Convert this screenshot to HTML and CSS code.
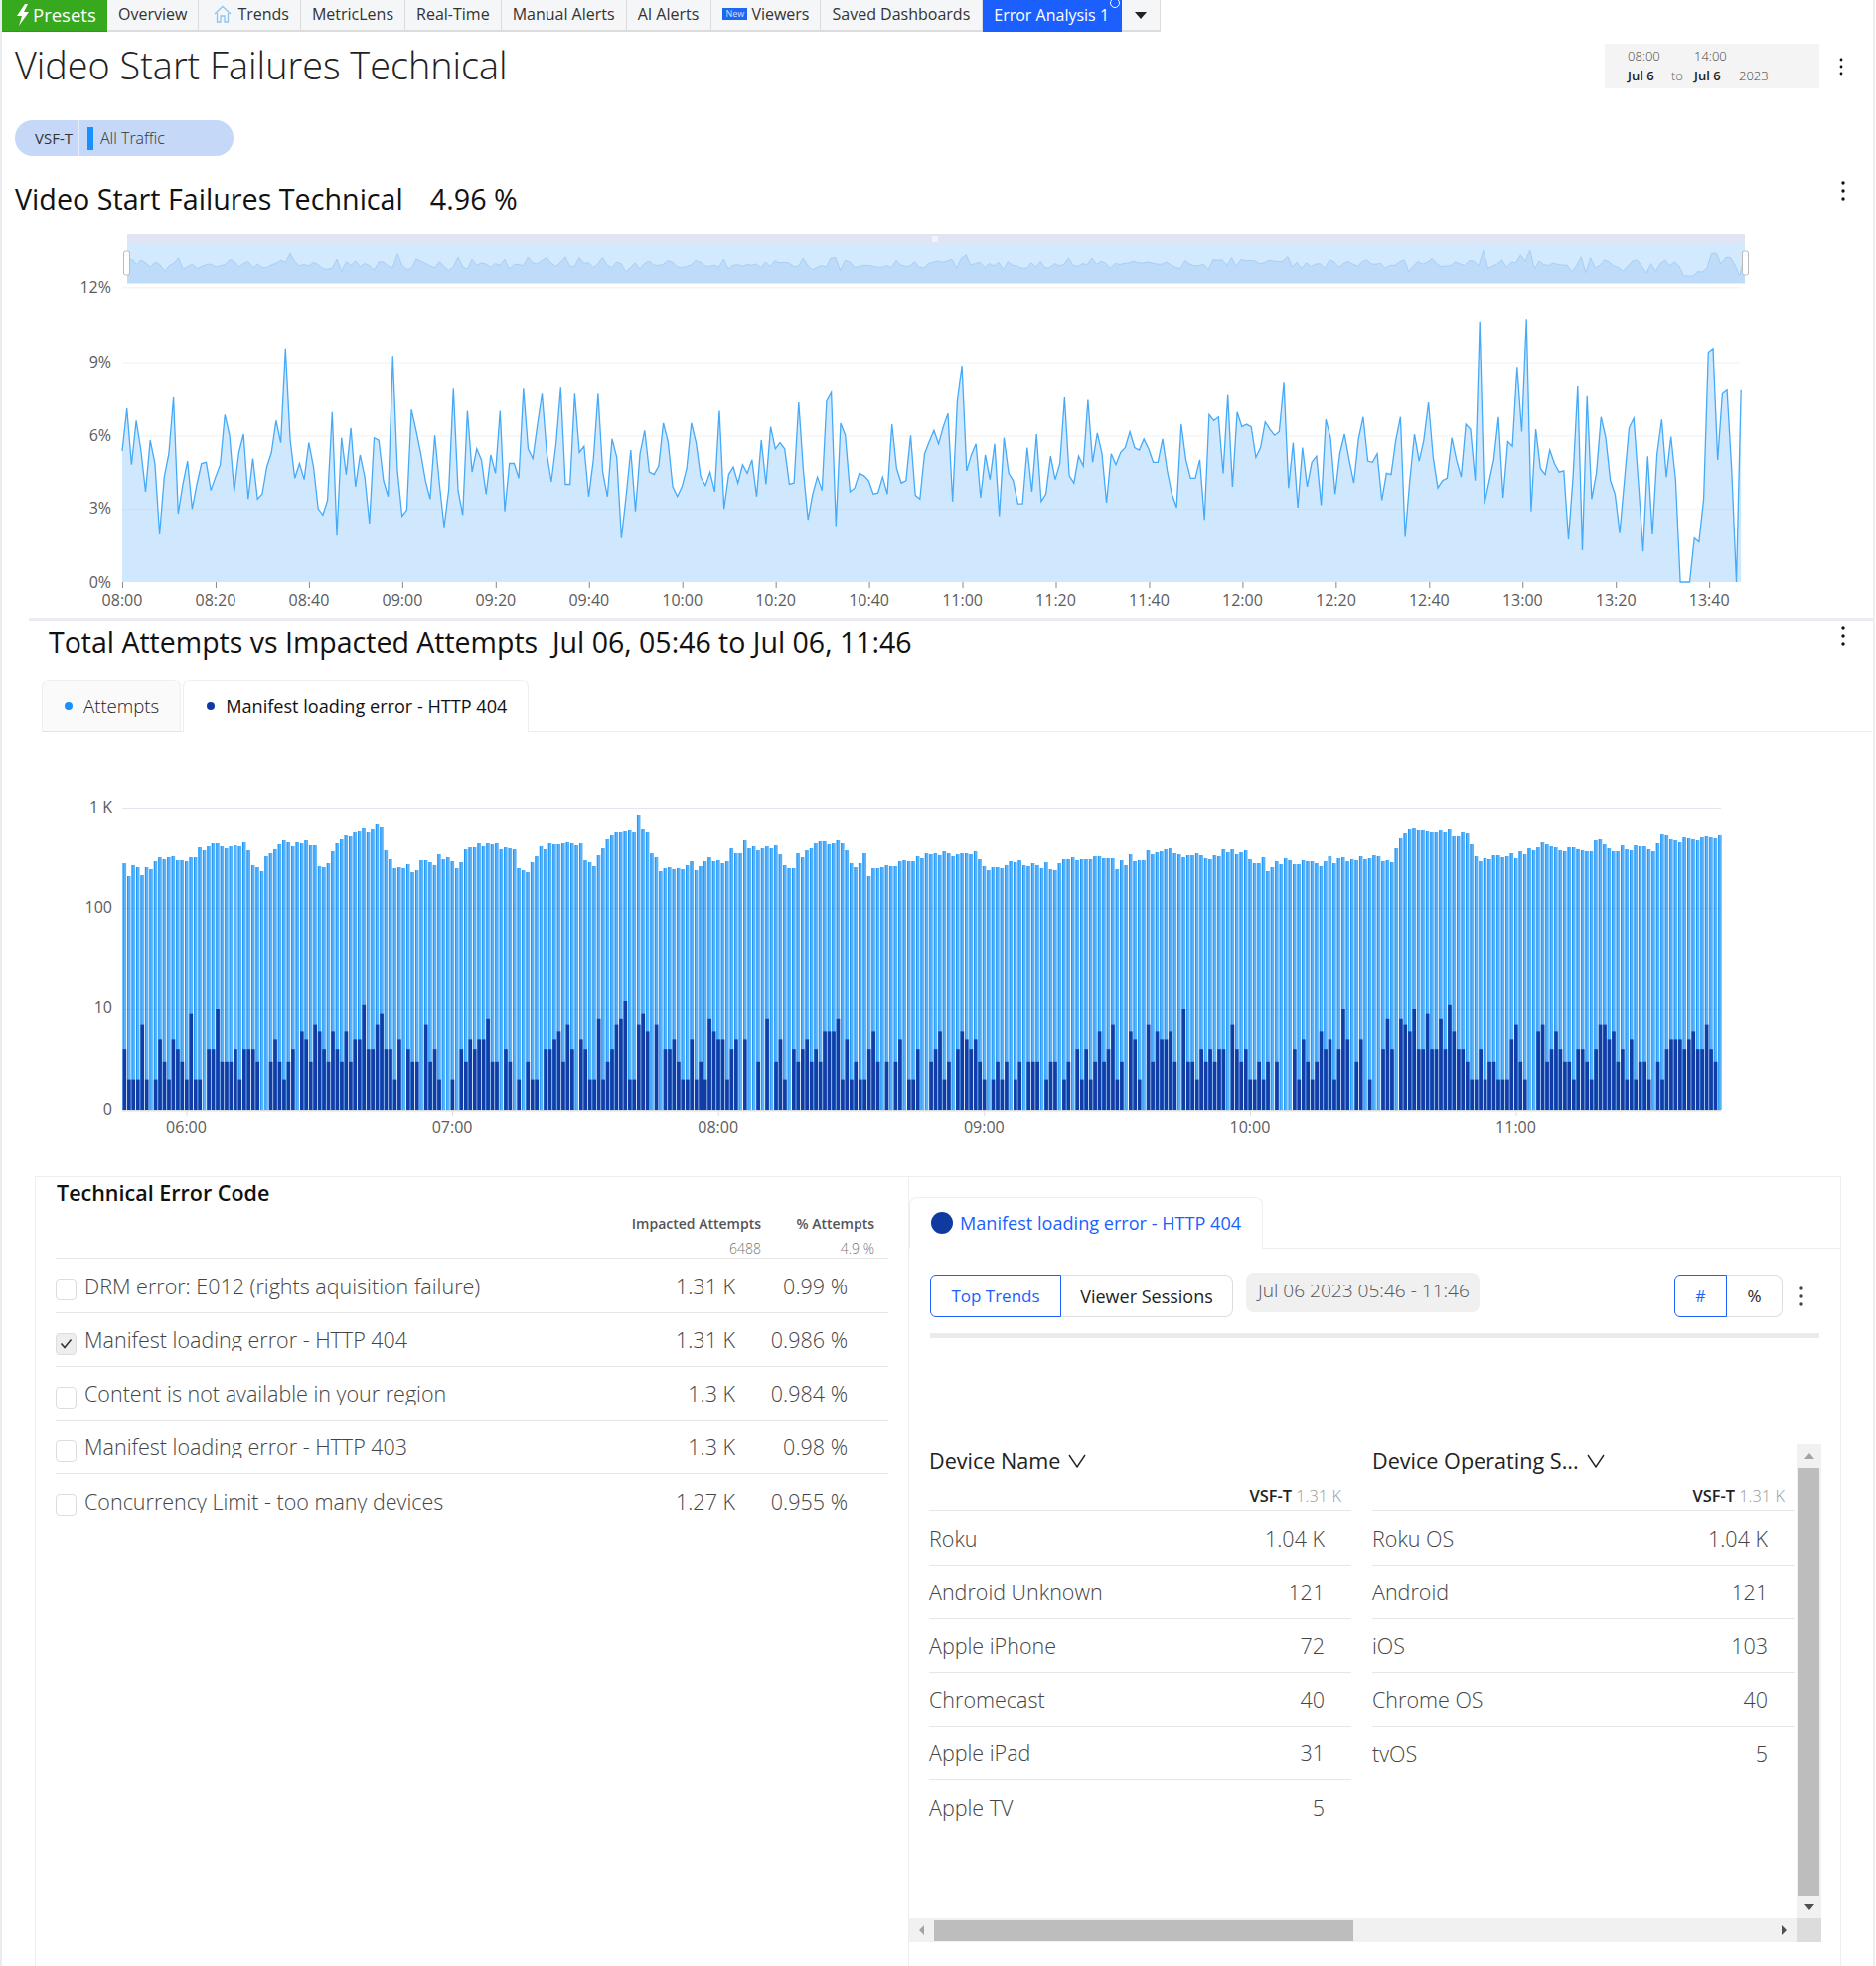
FILE: index.html
```html
<!DOCTYPE html>
<html lang="en">
<head>
    <meta charset="UTF-8">
    <meta name="viewport" content="width=device-width, initial-scale=1.0">
    <title>Video Start Failures Technical</title>
    <link rel="stylesheet" href="styles.css">
</head>
<body>
<div class="page">
    <nav class="tabs">
        <a class="tab tab-presets">
            <svg class="bolt" width="14" height="22" viewBox="0 0 14 22"><path d="M9 0 L1 12 L6 12 L3 22 L13 8 L8 8 L12 0 Z" fill="#fff"/></svg>
            Presets
        </a>
        <a class="tab">Overview</a>
        <a class="tab">
            <svg class="home" width="18" height="18" viewBox="0 0 18 18"><path d="M1 9 L9 1.5 L17 9 M3.5 8 V17 H7 V11 H11 V17 H14.5 V8" fill="none" stroke="#8cc4f2" stroke-width="1.3"/></svg>
            Trends
        </a>
        <a class="tab">MetricLens</a>
        <a class="tab">Real-Time</a>
        <a class="tab">Manual Alerts</a>
        <a class="tab tab-wide">AI Alerts</a>
        <a class="tab"><span class="new-badge">New</span>Viewers</a>
        <a class="tab tab-wide">Saved Dashboards</a>
        <a class="tab tab-active">Error Analysis 1<span class="tab-ring"></span></a>
        <a class="tab tab-more"><span class="caret"></span></a>
    </nav>

    <header class="title-row">
        <h1>Video Start Failures Technical</h1>
        <div class="date-box">
            <div class="date-col"><span class="date-time">08:00</span><span class="date-day">Jul 6</span></div>
            <div class="date-to">to</div>
            <div class="date-col"><span class="date-time">14:00</span><span class="date-day">Jul 6</span></div>
            <div class="date-year">2023</div>
        </div>
        <svg class="dots" width="4" height="18" viewBox="0 0 4 18"><circle cx="2" cy="2" r="1.4"/><circle cx="2" cy="9" r="1.4"/><circle cx="2" cy="16" r="1.4"/></svg>
    </header>

    <div class="pill">
        <span class="pill-metric">VSF-T</span>
        <span class="pill-bar"></span>
        <span class="pill-filter">All Traffic</span>
    </div>

    <div class="section-head">
        <h2>Video Start Failures Technical<span class="metric-value">4.96 %</span></h2>
        <svg class="dots" width="4" height="20" viewBox="0 0 4 20"><circle cx="2" cy="2" r="1.7"/><circle cx="2" cy="10" r="1.7"/><circle cx="2" cy="18" r="1.7"/></svg>
    </div>

    <div id="trendChart" class="chart trend-chart"></div>

    <div class="section-head section-head-attempts">
        <h2>Total Attempts vs Impacted Attempts&nbsp; Jul 06, 05:46 to Jul 06, 11:46</h2>
        <svg class="dots" width="4" height="20" viewBox="0 0 4 20"><circle cx="2" cy="2" r="1.7"/><circle cx="2" cy="10" r="1.7"/><circle cx="2" cy="18" r="1.7"/></svg>
    </div>

    <div class="series-tabs">
        <div class="series-tab series-tab-off"><span class="dot dot-light"></span>Attempts</div>
        <div class="series-tab"><span class="dot dot-dark"></span>Manifest loading error - HTTP 404</div>
    </div>

    <div id="attemptsChart" class="chart attempts-chart"></div>

    <div class="breakdown">
        <section class="errors">
            <h3>Technical Error Code</h3>
            <div class="errors-head">
                <span>Impacted Attempts</span>
                <span>% Attempts</span>
                <span class="errors-total">6488</span>
                <span class="errors-total">4.9 %</span>
            </div>
            <div class="error-row">
                <span class="check"></span>
                <span class="error-name error-name-full">DRM error: E012 (rights aquisition failure)</span>
                <span class="num">1.31 K</span>
                <span class="num">0.99 %</span>
            </div>
            <div class="error-row">
                <span class="check check-on"><svg width="13" height="11" viewBox="0 0 13 11"><path d="M1.5 5.5 L5 9.5 L11.5 1.5" fill="none" stroke="#333" stroke-width="1.6"/></svg></span>
                <span class="error-name">Manifest loading error - HTTP 404</span>
                <span class="num">1.31 K</span>
                <span class="num">0.986 %</span>
            </div>
            <div class="error-row">
                <span class="check"></span>
                <span class="error-name">Content is not available in your region</span>
                <span class="num">1.3 K</span>
                <span class="num">0.984 %</span>
            </div>
            <div class="error-row">
                <span class="check"></span>
                <span class="error-name">Manifest loading error - HTTP 403</span>
                <span class="num">1.3 K</span>
                <span class="num">0.98 %</span>
            </div>
            <div class="error-row error-row-last">
                <span class="check"></span>
                <span class="error-name">Concurrency Limit - too many devices</span>
                <span class="num">1.27 K</span>
                <span class="num">0.955 %</span>
            </div>
        </section>

        <section class="detail">
            <div class="detail-tabs">
                <div class="detail-tab"><span class="detail-dot"></span>Manifest loading error - HTTP 404</div>
            </div>

            <div class="toolbar">
                <div class="btn-group">
                    <button class="btn btn-on btn-trends">Top Trends</button>
                    <button class="btn btn-sessions">Viewer Sessions</button>
                </div>
                <div class="date-chip">Jul 06 2023 05:46 - 11:46</div>
                <div class="btn-group btn-group-right">
                    <button class="btn btn-on btn-hash">#</button>
                    <button class="btn btn-pct">%</button>
                </div>
                <svg class="dots dots-toolbar" width="4" height="20" viewBox="0 0 4 20"><circle cx="2" cy="2" r="1.7" fill="#444"/><circle cx="2" cy="10" r="1.7" fill="#444"/><circle cx="2" cy="18" r="1.7" fill="#444"/></svg>
            </div>
            <div class="toolbar-rule"></div>

            <div class="scroll-area">
                <div class="device-cols">
                    <div class="device-col">
                        <div class="device-head">Device Name
                            <svg width="18" height="14" viewBox="0 0 18 14"><path d="M1 1 L9 13 L17 1" fill="none" stroke="#222" stroke-width="1.4"/></svg>
                        </div>
                        <div class="device-sub"><b>VSF-T</b> 1.31 K</div>
                        <div class="device-row"><span>Roku</span><span>1.04 K</span></div>
                        <div class="device-row"><span>Android Unknown</span><span>121</span></div>
                        <div class="device-row"><span>Apple iPhone</span><span>72</span></div>
                        <div class="device-row"><span>Chromecast</span><span>40</span></div>
                        <div class="device-row"><span>Apple iPad</span><span>31</span></div>
                        <div class="device-row device-row-last"><span>Apple TV</span><span>5</span></div>
                    </div>
                    <div class="device-col">
                        <div class="device-head">Device Operating S...
                            <svg width="18" height="14" viewBox="0 0 18 14"><path d="M1 1 L9 13 L17 1" fill="none" stroke="#222" stroke-width="1.4"/></svg>
                        </div>
                        <div class="device-sub"><b>VSF-T</b> 1.31 K</div>
                        <div class="device-row"><span>Roku OS</span><span>1.04 K</span></div>
                        <div class="device-row"><span>Android</span><span>121</span></div>
                        <div class="device-row"><span>iOS</span><span>103</span></div>
                        <div class="device-row"><span>Chrome OS</span><span>40</span></div>
                        <div class="device-row device-row-last"><span>tvOS</span><span>5</span></div>
                    </div>
                </div>
                <div class="vbar">
                    <span class="arrow arrow-up"></span>
                    <span class="vbar-thumb"></span>
                    <span class="arrow arrow-down"></span>
                </div>
                <div class="hbar">
                    <span class="arrow arrow-left"></span>
                    <span class="hbar-thumb"></span>
                    <span class="arrow arrow-right"></span>
                </div>
                <div class="corner"></div>
            </div>
        </section>
    </div>
</div>
<script src="chart.js"></script>
</body>
</html>
```

FILE: styles.css
```css
* {
    box-sizing: border-box;
}
body {
    margin: 0;
    font-family: "Open Sans", Arial, sans-serif;
    color: #222;
    background-color: #fff;
}
.page {
    width: 1887px;
    height: 1979px;
    overflow: hidden;
    border-left: 2px solid #e9edf1;
    border-right: 2px solid #eeeeee;
}

/* top tabs */
.tabs {
    display: flex;
    height: 32px;
}
.tab {
    display: flex;
    align-items: center;
    height: 32px;
    padding: 0 11px 3px;
    font-size: 16px;
    color: #333;
    background-color: #f5f6f7;
    border-right: 1px solid #dcdcdc;
    border-bottom: 2px solid #dcdcdc;
    position: relative;
}
.tab-wide {
    padding-right: 12px;
}
.tab-presets {
    width: 106px;
    padding: 0 0 2px 14px;
    font-size: 18.5px;
    color: #fff;
    background-color: #37a91f;
    border-right: none;
    border-bottom: 1px solid #2f9a19;
}
.bolt {
    margin-right: 3px;
}
.home {
    margin: 0 6px 0 4px;
}
.new-badge {
    width: 25px;
    height: 12px;
    margin-right: 4px;
    font-size: 9px;
    line-height: 12px;
    text-align: center;
    color: #cfe0ff;
    background-color: #1f66f5;
}
.tab-active {
    padding-right: 13px;
    color: #fff;
    background-color: #1b5fff;
    border-right: none;
    border-bottom: none;
}
.tab-ring {
    position: absolute;
    top: -2px;
    right: 2px;
    width: 10px;
    height: 10px;
    border: 1px solid #fff;
    border-radius: 50%;
    background-color: #1b5fff;
}
.tab-more {
    width: 39px;
    padding: 0;
    justify-content: center;
}
.caret {
    width: 0;
    height: 0;
    border-left: 6px solid transparent;
    border-right: 6px solid transparent;
    border-top: 7px solid #222;
}

/* title */
.title-row {
    display: flex;
    align-items: center;
    margin-top: 12px;
    padding: 0 30px 0 13px;
    height: 45px;
}
h1 {
    flex: 1;
    margin: -2px 0 0;
    font-size: 37.8px;
    font-weight: 300;
    line-height: 44px;
    color: #222;
}
.date-box {
    display: flex;
    gap: 11px;
    width: 216px;
    height: 45px;
    padding: 2px 0 0 23px;
    font-size: 13px;
    background-color: #f4f4f4;
}
.date-col {
    display: flex;
    flex-direction: column;
    width: 33px;
    line-height: 20px;
}
.date-time {
    font-weight: 300;
    color: #444;
}
.date-day {
    font-weight: 600;
    color: #222;
    white-space: nowrap;
}
.date-to {
    width: 12px;
    margin-top: 20px;
    line-height: 20px;
    color: #666;
    font-weight: 300;
}
.date-year {
    margin-top: 20px;
    margin-left: 1px;
    line-height: 20px;
    color: #444;
    font-weight: 300;
}
.dots {
    fill: #111;
    flex: none;
}
.title-row .dots {
    margin-left: 20px;
}

.pill {
    display: flex;
    align-items: center;
    width: 220px;
    height: 36px;
    margin: 32px 0 0 13px;
    font-size: 15px;
    background-color: #c5d8f7;
    border-radius: 18px;
}
.pill-metric {
    width: 65px;
    height: 36px;
    padding-left: 20px;
    line-height: 36px;
    color: #333;
    border-right: 1px solid #e4ecfa;
}
.pill-bar {
    width: 6px;
    height: 23px;
    margin-left: 8px;
    background-color: #1890ff;
}
.pill-filter {
    margin-left: 7px;
    font-size: 16px;
    font-weight: 300;
    color: #333;
}

/* section headings */
.section-head {
    display: flex;
    justify-content: space-between;
    align-items: flex-start;
    height: 36px;
    margin-top: 25px;
    padding: 0 28px 0 13px;
}
h2 {
    margin: 0;
    font-size: 28.7px;
    font-weight: 400;
    line-height: 36px;
    color: #111;
}
.metric-value {
    margin-left: 27px;
}
.section-head-attempts {
    margin-top: 3px;
    padding-left: 47px;
}
.section-head-attempts h2 {
    font-size: 28.5px;
}
.section-head-attempts .dots {
    margin-top: 2px;
}
.chart svg {
    display: block;
}
.trend-chart {
    height: 400px;
    margin-top: 7px;
}
.attempts-chart {
    height: 447px;
}

.series-tabs {
    display: flex;
    gap: 2px;
    width: 1842px;
    height: 53px;
    margin: 20px 0 0 40px;
    border-bottom: 1px solid #eeeeee;
}
.series-tab {
    display: flex;
    align-items: center;
    height: 53px;
    padding: 0 21px 0 23px;
    font-size: 18.1px;
    color: #111;
    background-color: #fff;
    border: 1px solid #eeeeee;
    border-bottom: none;
    border-radius: 8px 8px 0 0;
}
.series-tab-off {
    padding: 0 21px 0 22px;
    font-size: 18.6px;
    font-weight: 300;
    color: #222;
    background-color: #fafafa;
    border-bottom: 1px solid #e4e4e4;
}
.dot {
    width: 8px;
    height: 8px;
    margin-right: 11px;
    border-radius: 50%;
}
.dot-light {
    background-color: #1890ff;
}
.dot-dark {
    background-color: #0f3ba1;
}

/* breakdown panels */
.breakdown {
    display: flex;
    width: 1818px;
    height: 795px;
    margin-left: 33px;
    border-top: 1px solid #eeeeee;
    border-left: 1px solid #eeeeee;
    border-right: 1px solid #eeeeee;
}
.errors {
    width: 878px;
    padding: 0 20px;
    flex: none;
}
h3 {
    margin: 0;
    padding-left: 1px;
    font-size: 21.5px;
    font-weight: 600;
    line-height: 32px;
    color: #111;
}
.errors-head {
    display: grid;
    grid-template-columns: 1fr 114px;
    justify-items: end;
    padding-right: 14px;
    margin-top: 2px;
    font-size: 14px;
    font-weight: 600;
    line-height: 26px;
    color: #555;
    border-bottom: 1px solid #e6e6e6;
    height: 48px;
}
.errors-total {
    font-weight: 300;
    font-size: 14px;
    line-height: 24px;
    color: #777;
}
.error-row {
    display: grid;
    grid-template-columns: 21px 1fr 130px 113px;
    align-items: center;
    height: 54px;
    padding-right: 41px;
    font-size: 21.5px;
    font-weight: 300;
    color: #444;
    border-bottom: 1px solid #e6e6e6;
}
.errors-head + .error-row {
    height: 55px;
}
.error-row-last {
    border-bottom: none;
}
.check {
    display: flex;
    align-items: center;
    justify-content: center;
    width: 21px;
    height: 22px;
    margin-top: 8px;
    border: 1px solid #dddddd;
    border-radius: 4px;
}
.check-on {
    background-color: #eeeeee;
}
/* the row clips descenders, as the real table does */
.error-name {
    height: 23px;
    margin-left: 8px;
    overflow: hidden;
    line-height: 23px;
    white-space: nowrap;
}
.error-name-full {
    overflow: visible;
}
.num {
    text-align: right;
}

.detail {
    flex: 1;
    border-left: 1px solid #eeeeee;
    padding-top: 20px;
}
.detail-tabs {
    height: 52px;
    border-bottom: 1px solid #eeeeee;
}
.detail-tab {
    display: flex;
    align-items: center;
    width: 356px;
    height: 52px;
    padding-left: 21px;
    font-size: 18.1px;
    color: #1b5fff;
    background-color: #fff;
    border: 1px solid #eeeeee;
    border-bottom: 1px solid #fff;
    border-radius: 8px 8px 0 0;
}
.detail-dot {
    width: 22px;
    height: 22px;
    margin-right: 7px;
    border-radius: 50%;
    background-color: #0f3ba1;
}
.toolbar {
    display: flex;
    align-items: flex-start;
    height: 43px;
    margin: 26px 0 0 21px;
}
.btn-group {
    display: flex;
}
.btn-group-right {
    margin-left: 196px;
}
.btn {
    height: 43px;
    font-family: inherit;
    font-size: 18px;
    color: #222;
    background-color: #fff;
    border: 1px solid #dddddd;
}
.btn-on {
    color: #1b5fff;
    border-color: #1b5fff;
    border-radius: 6px 0 0 6px;
}
.btn-trends {
    width: 132px;
    font-size: 17px;
}
.btn-sessions {
    width: 173px;
    border-left: none;
    border-radius: 0 8px 8px 0;
}
.btn-hash {
    width: 53px;
    font-size: 16px;
}
.btn-pct {
    width: 56px;
    font-size: 17px;
    border-left: none;
    border-radius: 0 8px 8px 0;
}
.date-chip {
    width: 235px;
    height: 40px;
    margin: -2px 0 0 13px;
    padding-left: 12px;
    font-size: 19.1px;
    line-height: 36px;
    color: #555;
    font-weight: 300;
    background-color: #f0f0f0;
    border-radius: 8px;
}
.dots-toolbar {
    margin: 12px 0 0 17px;
}
.toolbar-rule {
    width: 895px;
    height: 5px;
    margin: 16px 0 0 21px;
    background-color: #ebebeb;
}

/* device tables with fake scrollbars */
.scroll-area {
    display: grid;
    grid-template-columns: 893px 25px;
    grid-template-rows: 477px 24px;
    width: 918px;
    margin-top: 107px;
}
.device-cols {
    display: flex;
    gap: 21px;
    padding-left: 20px;
}
.device-col {
    width: 425px;
    flex: none;
}
.device-head {
    display: flex;
    align-items: center;
    gap: 8px;
    height: 33px;
    font-size: 21.6px;
    color: #222;
}
.device-sub {
    height: 34px;
    padding: 6px 10px 0 0;
    font-size: 16.4px;
    line-height: 26px;
    text-align: right;
    color: #999;
    font-weight: 300;
    border-bottom: 1px solid #e6e6e6;
}
.device-sub b {
    font-weight: 600;
    color: #222;
}
.device-row {
    display: flex;
    justify-content: space-between;
    align-items: center;
    height: 54px;
    padding-right: 27px;
    font-size: 21.5px;
    font-weight: 300;
    color: #444;
    border-bottom: 1px solid #e6e6e6;
}
.device-sub + .device-row {
    height: 55px;
}
.device-row-last {
    border-bottom: none;
}
.vbar {
    display: flex;
    flex-direction: column;
    align-items: center;
    background-color: #f1f1f1;
}
.vbar-thumb {
    flex: 1;
    width: 21px;
    margin: 4px 0 8px;
    background-color: #bdbdbd;
}
.hbar {
    display: flex;
    align-items: center;
    background-color: #f1f1f1;
}
.hbar-thumb {
    width: 422px;
    height: 21px;
    margin-left: 10px;
    background-color: #bdbdbd;
}
.corner {
    background-color: #dcdcdc;
}
.arrow {
    width: 0;
    height: 0;
    flex: none;
}
.arrow-up {
    margin-top: 9px;
    margin-bottom: 5px;
    border-left: 5px solid transparent;
    border-right: 5px solid transparent;
    border-bottom: 6px solid #a3a3a3;
}
.arrow-down {
    margin-bottom: 8px;
    border-left: 5px solid transparent;
    border-right: 5px solid transparent;
    border-top: 6px solid #505050;
}
.arrow-left {
    margin-left: 10px;
    border-top: 5px solid transparent;
    border-bottom: 5px solid transparent;
    border-right: 5px solid #a3a3a3;
}
.arrow-right {
    margin-left: auto;
    margin-right: 10px;
    border-top: 5px solid transparent;
    border-bottom: 5px solid transparent;
    border-left: 5px solid #505050;
}
```

FILE: chart.js
```js
// VSF-T percent, one value per minute from 08:00
const failures = [
    5.36, 7.1, 4.8, 6.6, 5.4, 3.7, 5.8, 4.85, 1.95, 4.3, 5.25, 7.55, 2.8, 4, 4.95, 3, 4, 4.85, 4.9, 3.75,
    4.3, 4.8, 6.85, 6, 3.7, 5.3, 6.05, 3.4, 5.05, 3.4, 3.6, 4.7, 5.3, 6.6, 5.7, 9.55, 5.85, 4.25, 4.85, 4.2,
    5.7, 4.7, 3, 2.75, 3.35, 6.95, 1.9, 5.9, 4.4, 6.3, 3.9, 5.2, 4.3, 2.4, 5.9, 5.8, 4.15, 3.5, 9.25, 4.55,
    2.7, 2.95, 7.05, 6.2, 5.25, 4.15, 3.4, 6, 4, 2.25, 3.8, 7.9, 3.75, 2.75, 7, 4.5, 5.45, 5, 3.6, 5.2,
    4.45, 7, 2.9, 4.85, 4.85, 4.25, 7.9, 5.45, 5.05, 6.45, 7.7, 5.3, 4.1, 5.65, 7.95, 4, 4, 7.7, 5.3, 5.55,
    3.5, 5, 7.7, 4.5, 3.5, 5.85, 5.1, 1.8, 3.5, 5.4, 2.9, 5.25, 6.2, 4.5, 4.4, 4.75, 6.5, 5.75, 3.9, 3.5,
    3.9, 4.65, 6.5, 5.7, 4.3, 3.95, 4.5, 3.7, 7, 3, 4.4, 4.7, 4.05, 4.8, 4.45, 5, 3.5, 5.8, 4, 6.35,
    5.45, 5.7, 5.45, 4, 4.05, 7.35, 4.55, 2.55, 3.6, 4.3, 3.75, 7.4, 7.75, 2.3, 6.5, 6, 3.7, 3.85, 4.45, 4.35,
    4.15, 3.6, 3.65, 4.3, 3.6, 6.45, 4.65, 4.05, 4.15, 6, 3.55, 3.4, 5.25, 5.75, 6.2, 5.65, 6.35, 6.9, 3.3, 7.4,
    8.85, 4.55, 5.2, 5.65, 3.45, 5.2, 4.2, 5.65, 2.7, 5.9, 4.45, 4.15, 3.2, 3.2, 5.5, 3.7, 6.05, 3.3, 3.6, 5.15,
    4.2, 4.85, 7.55, 4.35, 4.05, 5.15, 4.75, 7.45, 4.9, 6.1, 5.25, 3.25, 5.25, 4.8, 5.3, 5.5, 6.15, 5.5, 5.4, 5.85,
    5.45, 4.9, 4.9, 5.85, 4.55, 3.6, 3.05, 6.45, 5, 4.25, 4.25, 5, 2.55, 6.85, 6.6, 6.75, 4.45, 7.65, 3.9, 6.95,
    6.35, 6.45, 6.35, 5.1, 5.5, 6.55, 6.25, 6, 6.15, 8.15, 3.85, 5.7, 3.05, 5.5, 3.9, 4.9, 5.15, 3.15, 6.65, 5.9,
    3.6, 5.25, 6.05, 5, 4.05, 5.85, 6.75, 4.95, 4.9, 5.25, 3.35, 4.45, 4.4, 5.8, 6.75, 1.85, 4.15, 6.05, 4.95, 5.8,
    7.35, 5.1, 3.85, 4.15, 4.25, 5.9, 5, 4.3, 6.45, 6.25, 4.15, 10.65, 3.2, 4.1, 5, 6.75, 3.45, 5.75, 5.55, 8.8,
    6.15, 10.75, 2.9, 6.25, 4.65, 4.4, 5.4, 4.85, 4.5, 4.55, 1.75, 4.3, 8, 1.3, 7.6, 3.4, 4.45, 6.75, 5.9, 4.15,
    3.6, 2, 4.15, 6.3, 6.7, 4.05, 1.25, 5.15, 1.95, 5.25, 6.65, 4.3, 5.95, 4.15, 0, 0, 0, 1.8, 1.65, 3.4,
    9.4, 9.55, 5, 7.7, 7.85, 4.55, 0, 7.85
];

// bar heights in px on the log axis, one per minute from 05:46
const attemptHeights = [
    248, 235, 246, 244, 236, 244, 242, 250, 254, 252, 254, 255, 251, 251, 250, 254, 254, 264, 261, 265,
    268, 268, 265, 263, 265, 266, 265, 269, 261, 246, 244, 240, 255, 258, 262, 267, 271, 269, 265, 269,
    268, 271, 266, 266, 245, 244, 248, 260, 268, 272, 276, 275, 279, 281, 284, 280, 283, 288, 285, 261,
    252, 243, 244, 243, 247, 239, 241, 251, 251, 249, 246, 257, 252, 254, 250, 243, 249, 262, 264, 264,
    268, 265, 268, 267, 268, 262, 264, 263, 262, 243, 241, 239, 249, 255, 265, 262, 268, 267, 267, 268,
    269, 268, 266, 268, 251, 249, 245, 256, 263, 272, 276, 279, 279, 281, 282, 280, 297, 283, 280, 258,
    254, 240, 243, 244, 242, 243, 242,
    246, 250, 241, 245, 250, 254, 250, 251, 248, 250, 263, 258, 258, 271, 263, 265, 261, 263, 265, 263,
    266, 257, 246, 243, 243, 258, 254, 261, 263, 268, 270, 270, 267, 268, 271, 268, 261, 248, 244, 248,
    258, 235, 243, 243, 244, 246, 245, 245, 250, 251, 250, 250, 255, 253, 258, 257, 258, 256, 260, 258,
    255, 257, 258, 258, 257, 260, 252, 245, 241, 244, 244, 243, 246, 250, 249, 251, 246, 245, 248, 246,
    243, 249, 242, 241, 248, 252, 252, 254, 251, 252, 252, 252, 255, 255, 253, 253, 253, 242, 251, 246,
    257, 250, 251, 251, 261, 257, 259, 260, 262, 263, 258, 257, 254, 256, 256, 258, 256,
    253, 252, 256, 255, 262, 259, 262, 257, 259, 261, 252, 248, 248, 254, 240, 244, 250, 247, 253, 251,
    247, 247, 251, 250, 250, 248, 245, 250, 255, 248, 253, 254, 250, 252, 251, 255, 252, 253, 256, 255,
    250, 251, 249, 263, 273, 278, 283, 284, 282, 282, 281, 280, 280, 282, 280, 283, 275, 275, 280, 278,
    267, 255, 250, 253, 252, 256, 256, 254, 255, 258, 253, 260, 257, 263, 261, 264, 269, 267, 265, 264,
    261, 260, 264, 264, 262, 261, 260, 260, 271, 272, 267, 263, 260, 260, 266, 262, 261, 266, 265, 265,
    262, 260, 268, 277, 276, 272, 271, 269, 274, 273, 272, 271, 274, 275, 274, 273, 276
];

// impacted attempts per minute, same range
const impacted = [
    4, 2, 2, 2, 7, 2, 1, 2, 5, 3, 2, 5, 4, 3, 2, 9, 2, 2, 1, 4, 4, 10, 3, 3, 3, 4, 2, 4, 4, 4,
    3, 1, 1, 3, 5, 3, 2, 3, 4, 1, 6, 5, 3, 7, 6, 4, 3, 6, 4, 3, 6, 3, 5, 5, 11, 4, 4, 7, 9, 4,
    4, 2, 5, 1, 4, 3, 3, 1, 7, 3, 4, 2, 1, 1, 2, 1, 4, 3, 5, 4, 5, 5, 8, 3, 3, 1, 4, 3, 1, 2,
    1, 3, 2, 2, 1, 4, 4, 5, 6, 3, 7, 4, 1, 5, 4, 2, 2, 8, 2, 3, 4, 7, 8, 12, 2, 2, 7, 9, 6, 1,
    7, 1, 4, 4, 5, 3, 2,
    2, 5, 2, 3, 2, 8, 6, 5, 5, 2, 4, 5, 1, 5, 1, 1, 3, 1, 8, 1, 3, 5, 2, 1, 4, 3, 4, 5, 3, 4,
    3, 6, 6, 6, 8, 2, 5, 2, 3, 2, 2, 4, 6, 3, 1, 3, 1, 3, 5, 1, 2, 2, 4, 1, 1, 3, 4, 6, 2, 3,
    1, 4, 6, 5, 4, 5, 3, 2, 1, 2, 3, 2, 3, 1, 2, 3, 1, 3, 3, 3, 1, 2, 3, 3, 1, 2, 3, 1, 4, 2,
    4, 2, 3, 6, 3, 4, 7, 2, 3, 1, 6, 5, 2, 1, 7, 3, 6, 5, 5, 6, 3, 1, 10, 3, 3, 2, 4,
    3, 4, 3, 4, 4, 1, 7, 4, 3, 4, 2, 2, 3, 2, 3, 1, 3, 1, 1, 1, 4, 2, 5, 3, 2, 3, 6, 4, 5, 2,
    4, 10, 5, 1, 3, 5, 1, 2, 1, 1, 4, 8, 4, 1, 8, 7, 6, 10, 4, 4, 9, 4, 4, 8, 4, 11, 6, 4, 4, 3,
    2, 2, 4, 2, 3, 3, 2, 2, 2, 5, 7, 3, 2, 1, 1, 6, 7, 3, 4, 6, 4, 3, 3, 2, 4, 4, 3, 2, 4, 7,
    7, 5, 6, 3, 4, 2, 5, 2, 3, 3, 2, 1, 3, 2, 4, 5, 5, 5, 4, 5, 6, 4, 4, 7, 4, 3, 1
];

function pointsFor(values, x0, step, y0, scale) {
    return values.map((v, i) => `${(x0 + i * step).toFixed(1)},${(y0 - v * scale).toFixed(1)}`).join(' ');
}

function label(x, y, text, anchor) {
    return `<text x="${x}" y="${y}" text-anchor="${anchor}" class="axis">${text}</text>`;
}

function svgStyle() {
    return '<style>.axis{font:16px "Open Sans",Arial,sans-serif;fill:#5c5c5c}</style>';
}

function drawTrend() {
    const left = 123, step = 4.695, base = 586, perCent = 24.63;
    const end = left + (failures.length - 1) * step;
    const line = pointsFor(failures, left, step, base, perCent);
    let s = `<svg width="1884" height="400" viewBox="2 225 1884 400">${svgStyle()}`;

    // navigator strip
    const navLine = pointsFor(failures, 128, 4.69, 278, 2.4);
    s += '<rect x="128" y="236" width="1628" height="10" fill="#dfe5f2"/>';
    s += '<rect x="128" y="246" width="1628" height="39" fill="#d3e9fd"/>';
    s += `<polygon points="128,285 ${navLine} 1756,285" fill="#bedbfa"/>`;
    s += `<polyline points="${navLine}" fill="none" stroke="#a6cff6" stroke-width="1"/>`;
    s += '<rect x="128" y="285" width="1628" height="1" fill="#e4eefa"/>';
    s += '<path d="M939 238v6M941 238v6M943 238v6" stroke="#fff" stroke-width="1"/>';
    s += '<rect x="124.5" y="253" width="6" height="24" rx="2" fill="#fff" stroke="#bbb"/>';
    s += '<rect x="1753.5" y="253" width="6" height="24" rx="2" fill="#fff" stroke="#bbb"/>';

    // grid and area
    [289, 364, 438].forEach(y => {
        s += `<rect x="${left}" y="${y}" width="${end - left}" height="1.5" fill="#f6f6f6"/>`;
    });
    s += `<polygon points="${left},${base} ${line} ${end},${base}" fill="#cfe8fd"/>`;
    s += `<rect x="${left}" y="512" width="${end - left}" height="1" fill="#000" opacity="0.03"/>`;
    s += `<polyline points="${line}" fill="none" stroke="#45aaf9" stroke-width="1.3"/>`;

    ['12%', '9%', '6%', '3%', '0%'].forEach((t, i) => {
        s += label(112, [295, 370, 444, 517, 592][i], t, 'end');
    });
    for (let i = 0; i < 18; i++) {
        const min = 8 * 60 + i * 20;
        const t = String(Math.floor(min / 60)).padStart(2, '0') + ':' + String(min % 60).padStart(2, '0');
        const x = left + i * 93.95;
        s += `<rect x="${x}" y="586" width="1" height="6" fill="#888"/>`;
        s += label(x.toFixed(1), 610, t, 'middle');
    }

    // rule under the chart
    s += '<rect x="29" y="622" width="1856" height="3" fill="#e9edf1"/>';
    document.getElementById('trendChart').innerHTML = s + '</svg>';
}

function drawAttempts() {
    const left = 123.6, step = 4.46, base = 1117, decade = 101;
    let s = `<svg width="1884" height="447" viewBox="2 737 1884 447">${svgStyle()}`;
    s += '<rect x="123" y="813" width="1609" height="1" fill="#e0e6f1"/>';

    attemptHeights.forEach((h, i) => {
        const x = (left + i * step).toFixed(2);
        s += `<rect x="${x}" y="${base - h}" width="3.5" height="${h}" fill="#58b1fb"/>`;
        s += `<rect x="${x}" y="${base - h}" width="1" height="${h}" fill="#1f96f8"/>`;
    });
    impacted.forEach((v, i) => {
        const h = Math.log10(v) * decade;
        if (h > 0) {
            s += `<rect x="${(left + i * step).toFixed(2)}" y="${(base - h).toFixed(1)}" width="3.6" height="${h.toFixed(1)}" fill="#123ca6"/>`;
        }
    });
    s += '<rect x="123" y="914" width="1609" height="1" fill="#000" opacity="0.05"/>';
    s += '<rect x="123" y="1016" width="1609" height="1" fill="#000" opacity="0.05"/>';
    s += '<rect x="123" y="1117" width="1609" height="1.5" fill="#dddddd"/>';

    ['1 K', '100', '10', '0'].forEach((t, i) => {
        s += label(113, [818, 919, 1020, 1122][i], t, 'end');
    });
    ['06:00', '07:00', '08:00', '09:00', '10:00', '11:00'].forEach((t, i) => {
        const x = 187.5 + i * 267.6;
        s += `<rect x="${x}" y="1118" width="1" height="5" fill="#ddd"/>`;
        s += label(x.toFixed(1), 1140, t, 'middle');
    });
    document.getElementById('attemptsChart').innerHTML = s + '</svg>';
}

drawTrend();
drawAttempts();
```
